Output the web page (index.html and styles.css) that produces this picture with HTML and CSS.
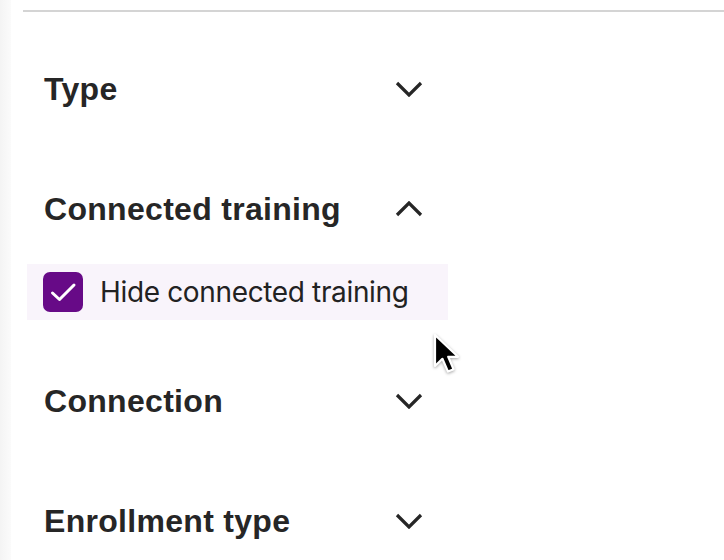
FILE: index.html
```html
<!DOCTYPE html>
<html>
<head>
	<title>Filters</title>
	<link rel="stylesheet" href="styles.css">
</head>
<body>
	<div class="page">
		<div class="edge"></div>
		<div class="main">
			<div class="filters">
				<div class="section">
					<button class="section-header">
						<span>Type</span>
						<svg class="chevron" viewBox="0 0 28 16"><path d="M2 2 L14 14 L26 2"/></svg>
					</button>
				</div>

				<div class="section open">
					<button class="section-header">
						<span>Connected training</span>
						<svg class="chevron" viewBox="0 0 28 16"><path d="M2 14 L14 2 L26 14"/></svg>
					</button>
					<div class="section-body">
						<label class="option">
							<span class="checkbox">
								<svg viewBox="0 0 40 40"><path d="M9.5 21 L16.5 27.5 L31 13"/></svg>
							</span>
							<span class="option-label">Hide connected training</span>
						</label>
					</div>
				</div>

				<div class="section">
					<button class="section-header">
						<span>Connection</span>
						<svg class="chevron" viewBox="0 0 28 16"><path d="M2 2 L14 14 L26 2"/></svg>
					</button>
				</div>

				<div class="section">
					<button class="section-header">
						<span>Enrollment type</span>
						<svg class="chevron" viewBox="0 0 28 16"><path d="M2 2 L14 14 L26 2"/></svg>
					</button>
				</div>
			</div>
		</div>
	</div>

	<svg class="cursor" viewBox="0 0 14 22">
		<path d="M1.5 1.5 L1.5 17 L5.2 13.4 L8 19.8 L10.8 18.6 L8.1 12.4 L13 12.4 Z"/>
	</svg>
</body>
</html>
```

FILE: styles.css
```css
body {
	margin: 0;
	background-color: #ffffff;
	font-family: "Liberation Sans", Arial, sans-serif;
	color: #222222;
	overflow: hidden;
}

.page {
	display: flex;
	height: 560px;
}

.edge {
	width: 11px;
	background: linear-gradient(to right, #f4f4f4, #fbfbfb);
}

.main {
	flex: 1;
	margin-top: 10px;
	margin-left: 12px;
	border-top: 2px solid #d4d4d4;
	padding-left: 4px;
}

.filters {
	width: 421px;
	padding-top: 17px;
}

.section-header {
	display: flex;
	align-items: center;
	justify-content: space-between;
	width: 100%;
	padding: 40px 25px 40px 17px;
	border: none;
	background: none;
	font-family: "Liberation Sans", Arial, sans-serif;
	font-size: 32px;
	font-weight: bold;
	line-height: 40px;
	letter-spacing: 0.3px;
	color: #262626;
	text-align: left;
	cursor: pointer;
}

.chevron {
	width: 28px;
	height: 16px;
	fill: none;
	stroke: #262626;
	stroke-width: 3.2;
}

.open .section-header {
	padding-bottom: 35px;
}

.open .section-body {
	padding-bottom: 21px;
}

.option {
	display: flex;
	align-items: center;
	gap: 17px;
	height: 56px;
	padding-left: 16px;
	background-color: #f9f4fb;
	cursor: pointer;
}

.checkbox {
	display: block;
	flex-shrink: 0;
	width: 40px;
	height: 40px;
	border-radius: 7px;
	background-color: #670a87;
}

.checkbox svg {
	display: block;
	width: 40px;
	height: 40px;
	fill: none;
	stroke: #ffffff;
	stroke-width: 3;
	stroke-linecap: round;
	stroke-linejoin: round;
}

.option-label {
	font-family: Inter, "Liberation Sans", sans-serif;
	font-size: 28px;
	letter-spacing: -0.35px;
	color: #222222;
}

.cursor {
	position: absolute;
	left: 432px;
	top: 332px;
	width: 28px;
	height: 44px;
	fill: #000000;
	stroke: #ffffff;
	stroke-width: 1.1;
	stroke-linejoin: round;
	filter: drop-shadow(0 1px 1.5px rgba(0, 0, 0, 0.35));
}
```
